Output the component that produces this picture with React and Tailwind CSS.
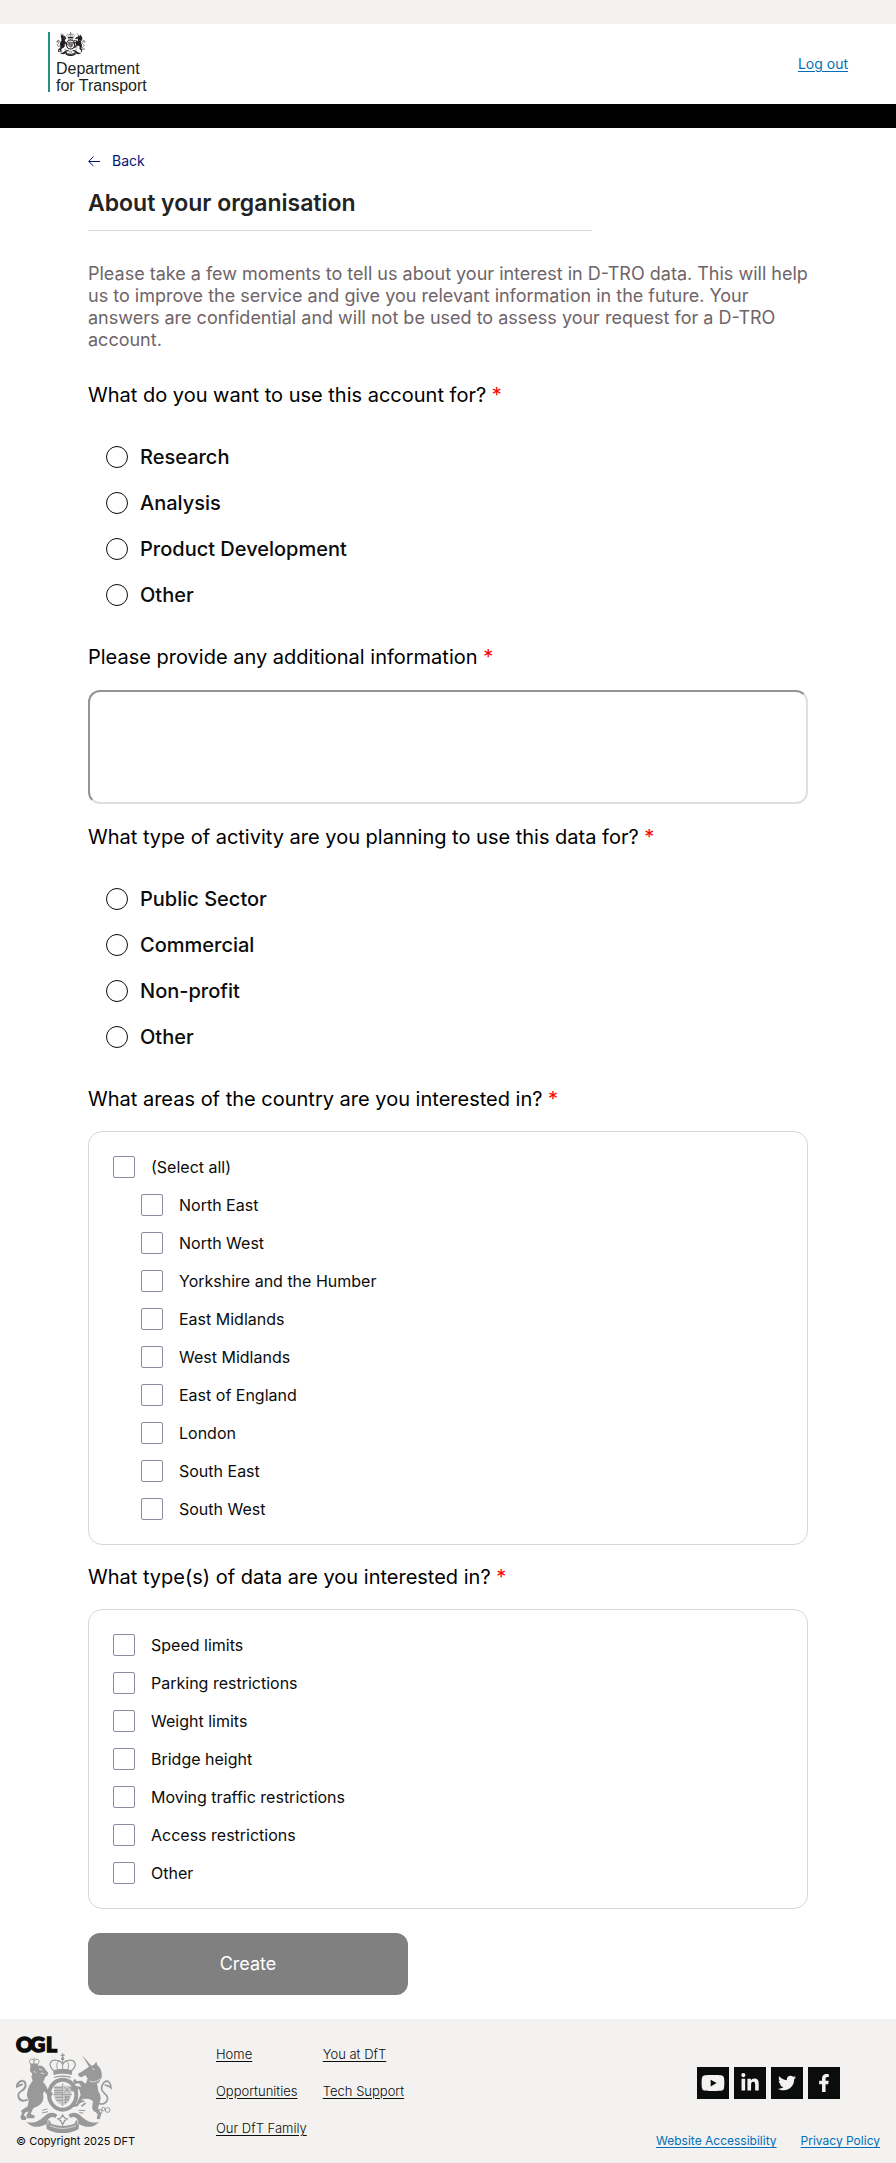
import { FaFacebookF, FaLinkedinIn, FaTwitter, FaYoutube } from "react-icons/fa";

const purposes = ["Research", "Analysis", "Product Development", "Other"];
const activities = ["Public Sector", "Commercial", "Non-profit", "Other"];
const regions = [
  "North East",
  "North West",
  "Yorkshire and the Humber",
  "East Midlands",
  "West Midlands",
  "East of England",
  "London",
  "South East",
  "South West",
];
const dataTypes = [
  "Speed limits",
  "Parking restrictions",
  "Weight limits",
  "Bridge height",
  "Moving traffic restrictions",
  "Access restrictions",
  "Other",
];
const socials = [
  { name: "YouTube", Icon: FaYoutube, size: "size-6" },
  { name: "LinkedIn", Icon: FaLinkedinIn, size: "size-5" },
  { name: "Twitter", Icon: FaTwitter, size: "size-[18px]" },
  { name: "Facebook", Icon: FaFacebookF, size: "size-[18px]" },
];

function Crest({ className }) {
  return (
    <svg viewBox="48 98 288 240" className={className} fill="currentColor" stroke="none" aria-hidden="true">
      {/* crown */}
      <g fill="none" stroke="currentColor" strokeWidth="4">
        <path d="M160 150C142 132 152 117 170 120c8 1 16 7 18 12 2-5 10-11 18-12 18-3 28 12 10 30" />
        <path d="M175 150c-8-14-5-24 4-29M201 150c8-14 5-24-4-29M188 118v32" strokeWidth="3" />
        <path d="M188 99v14M182 105h12" />
      </g>
      <circle cx="188" cy="115" r="5" />
      <path d="M159 150q29-9 58 0l-2 14q-27-7-54 0z" />
      <path d="M163 169q25-7 50 0v4q-25-7-50 0z" />
      {/* garter and shield */}
      <ellipse cx="188" cy="223" rx="41" ry="45" fill="none" stroke="currentColor" strokeWidth="12" />
      <path d="M164 196h22v24h-24zM190 196h22l2 24h-24zM162 224h24v31q-20-8-24-31zM190 224h24q-4 23-24 31z" opacity=".45" />
      <g fill="none" stroke="currentColor" strokeWidth="3">
        <path d="M162 202h24M162 210h24M163 217h23M166 231h20M169 240h17M193 200l16 16M209 200l-16 16M194 230h16M193 238h13M193 246h8M197 226v20M204 226v16" />
        <path d="M188 189v68M160 222h56" />
      </g>
      {/* lion */}
      <g fill="none" stroke="currentColor" strokeWidth="3">
        <path d="M92 131c-8-11-1-16 5-14 3 1 5 3 5 5 1-3 4-6 9-5 7 1 8 7 2 15M102 112v18" />
        <path d="M83 238C56 249 46 222 64 212c14-8 17-22 6-31" strokeWidth="6" />
        <path d="M70 181c-13 0-18 8-20 18 7-5 13-4 18-8" strokeWidth="6" />
      </g>
      <path d="M90 131q12-5 25 0l-2 8H92z" />
      <path d="M91 138l25-2c9-1 17 4 21 13l8 8-3 9-7 5-2 8-4 5c8 9 12 18 16 27l14 8-5 10-12-4-9-13-4 9c4 17-1 28-15 36l-14 7-8 16 13 7-3 7H82l-3-8 7-13-11 4-3 8 9 8-5 6H65l-4-9 5-11-3-8 7-5 13-8 3-17-5-14c0-20 8-35 17-46l-4-12 3-9-7-7z" />
      <path d="M117 146l10 3M122 158l10 2M102 151l5 7" stroke="#fff" strokeWidth="3" fill="none" opacity=".65" />
      {/* unicorn */}
      <path d="M246 104l29 33-7 4z" />
      <path d="M265 141l17-8 7-9 3 11c12 9 13 21 14 33l-9 19-6 2 4 24c9 13 8 24 4 34l-5 17 10 16-5 17-9-1 3-14-17-18 3-22-12-6-18-1-16 23-16 3-1-7 13-3 13-28-5-18-11 10-13-3-2-11 5-5 5 9 10-8 13 3-7-11-13 2-5-9 6-7 5 7 15-1 12 9 6-15-7-11-11 7-9-3-2-8 11-6z" />
      <path d="M276 145l8 2M269 182q14 7 31-5" fill="none" stroke="#fff" strokeWidth="3" opacity=".65" />
      <g fill="none" stroke="currentColor" strokeWidth="5">
        <path d="M294 249c25 8 38-15 20-29-12-9-13-22-1-35 12-8 20 4 20 17-7-7-14-5-19-9" />
        <path d="M236 247l17-6M244 258l13-10" />
      </g>
      <g fill="none" stroke="currentColor" strokeWidth="3">
        <circle cx="286" cy="267" r="6" />
        <circle cx="300" cy="274" r="6" />
        <circle cx="310" cy="266" r="5" />
        <circle cx="323" cy="269" r="7" />
        <path d="M236 270l20 1M238 277l12 1M126 270l16-4M126 278l18-4" />
      </g>
      {/* pendant and motto ribbon */}
      <path d="M188 284l6 9 8 3-8 5-6 12-6-12-8-5 8-3z" fill="none" stroke="currentColor" strokeWidth="4" />
      <path d="M79 304c22 8 42-4 56-18 11-11 26-12 37-3l-6 10c-8-6-16-3-22 5 5 1 8 5 8 11 22 11 51 11 73 0 0-6 3-10 8-11-6-8-14-11-22-5l-6-10c11-9 26-8 37 3 14 14 34 26 56 18-17 20-42 19-61 7l-1 15c-28 17-68 17-96 0l-1-15c-19 12-44 13-60-7z" />
      <path d="M144 299v14M233 299v14M149 316q39 17 79 0" fill="none" stroke="#fff" strokeWidth="3" opacity=".6" />
    </svg>
  );
}

function Question({ as: Tag = "h2", children, ...rest }) {
  return (
    <Tag className="block text-xl leading-6 font-normal text-black" {...rest}>
      {children} <span className="text-[#ff0000]">*</span>
    </Tag>
  );
}

function RadioGroup({ name, title, options }) {
  return (
    <section role="radiogroup" aria-labelledby={`${name}-title`}>
      <Question id={`${name}-title`}>{title}</Question>
      <div className="my-[38px] flex flex-col gap-[22px] pl-[18px]">
        {options.map((option) => (
          <label key={option} className="flex items-center gap-3 text-xl leading-6 font-medium text-[#0b0c0c]">
            <input
              type="radio"
              name={name}
              className="size-[22px] shrink-0 appearance-none rounded-full border border-[#0b0c0c] bg-white checked:border-[6px]"
            />
            {option}
          </label>
        ))}
      </div>
    </section>
  );
}

function Checkbox({ label }) {
  return (
    <label className="flex items-center gap-4 text-base leading-[22px] text-[#0b0c0c]">
      <input
        type="checkbox"
        className="size-[22px] shrink-0 appearance-none rounded-[2px] border border-[#8d8b9f] bg-white checked:bg-[#8d8b9f]"
      />
      {label}
    </label>
  );
}

function CheckboxCard({ children }) {
  return (
    <div className="my-5 flex flex-col gap-4 rounded-[14px] border border-[#d8d8d8] p-6">{children}</div>
  );
}

function FooterLink({ children }) {
  return (
    <a href="#" className="text-[13px] leading-[21px] font-light text-[#0b0c0c] underline underline-offset-2">
      {children}
    </a>
  );
}

export default function App() {
  return (
    <div className="bg-white font-['Inter','Liberation_Sans',sans-serif] text-[#0b0c0c]">
      <header>
        <div className="h-6 bg-[#f3f2f1]" />
        <div className="flex h-20 items-center justify-between px-12">
          <div className="flex h-16 items-start">
            <div className="h-[60px] w-0.5 bg-[#28917b]" />
            <div className="ml-1.5 font-['Liberation_Sans',Arial,sans-serif] text-base leading-[17px] text-[#231f20]">
              <Crest className="mb-1 h-6 w-[30px]" />
              <div>Department</div>
              <div>for Transport</div>
            </div>
          </div>
          <a href="#" className="text-sm leading-5 text-[#006fb7] underline underline-offset-2">
            Log out
          </a>
        </div>
        <div className="h-6 bg-black" />
      </header>

      <main className="mx-auto max-w-[896px] px-[88px] pt-[23px] pb-6">
        <a href="#" className="flex w-fit items-center gap-3 text-sm leading-5 text-[#00147d]">
          <svg viewBox="0 0 12 12" className="size-3" fill="none" stroke="currentColor" aria-hidden="true">
            <path d="M12 6.500H1M5.500 1.500L.7 6.500l4.800 4.500" />
          </svg>
          Back
        </a>
        <h1 className="mt-4 w-[70%] border-b border-[#d8d8d8] pb-[11px] text-[23px] leading-8 font-semibold text-[#232323]">
          About your organisation
        </h1>
        <p className="mt-8 mb-8 text-lg leading-[22px] text-[#6f6468]">
          Please take a few moments to tell us about your interest in D-TRO data. This will help us to improve the
          service and give you relevant information in the future. Your answers are confidential and will not be used
          to assess your request for a D-TRO account.
        </p>

        <form>
          <RadioGroup name="purpose" title="What do you want to use this account for?" options={purposes} />

          <Question as="label" htmlFor="details">
            Please provide any additional information
          </Question>
          <textarea
            id="details"
            className="my-[21px] block h-[114px] w-full resize-none rounded-xl border-2 border-t-[#949494] border-r-[#e0e0e0] border-b-[#e0e0e0] border-l-[#949494] bg-white p-3"
          />

          <RadioGroup
            name="activity"
            title="What type of activity are you planning to use this data for?"
            options={activities}
          />

          <Question>What areas of the country are you interested in?</Question>
          <CheckboxCard>
            <Checkbox label="(Select all)" />
            <div className="flex flex-col gap-4 pl-7">
              {regions.map((region) => (
                <Checkbox key={region} label={region} />
              ))}
            </div>
          </CheckboxCard>

          <Question>What type(s) of data are you interested in?</Question>
          <CheckboxCard>
            {dataTypes.map((type) => (
              <Checkbox key={type} label={type} />
            ))}
          </CheckboxCard>

          <button type="button" className="mt-6 block h-[62px] w-80 rounded-xl bg-[#808080] text-lg text-white">
            Create
          </button>
        </form>
      </main>

      <footer className="flex h-36 justify-between bg-[#f3f2f1] px-4">
        <div className="flex">
          <div className="w-[200px] pt-[17px]">
            <svg viewBox="0 0 42 17" className="h-[17px] w-[42px] overflow-visible" role="img" aria-label="OGL">
              <text
                x="0 14 30"
                y="16"
                className="font-['Lato',sans-serif] text-[21px] font-black"
                fill="#0b0c0c"
                stroke="#0b0c0c"
                strokeWidth="1.500"
              >
                OGL
              </text>
            </svg>
            <Crest className="h-20 w-24 text-[#999999]" />
            <p className="text-[11px] leading-4">© Copyright 2025 DFT</p>
          </div>
          <nav className="grid auto-rows-max grid-cols-[auto_auto] gap-4 pt-[25px]">
            <FooterLink>Home</FooterLink>
            <FooterLink>You at DfT</FooterLink>
            <FooterLink>Opportunities</FooterLink>
            <FooterLink>Tech Support</FooterLink>
            <FooterLink>Our DfT Family</FooterLink>
          </nav>
        </div>
        <div className="pt-12">
          <div className="flex justify-end gap-[5px] pr-10">
            {socials.map(({ name, Icon, size }) => (
              <a
                key={name}
                href="#"
                aria-label={name}
                className="flex size-8 items-center justify-center bg-[#0b0c0c] text-[#f3f2f1]"
              >
                <Icon className={size} />
              </a>
            ))}
          </div>
          <div className="mt-8 flex gap-6 text-xs leading-5 text-[#006fb7]">
            <a href="#" className="underline underline-offset-2">
              Website Accessibility
            </a>
            <a href="#" className="underline underline-offset-2">
              Privacy Policy
            </a>
          </div>
        </div>
      </footer>
    </div>
  );
}
